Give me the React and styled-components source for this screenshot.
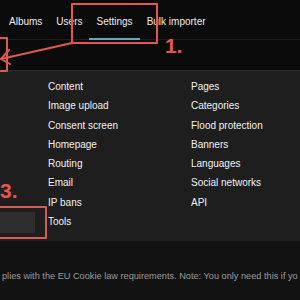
import React from 'react'
import styled, { createGlobalStyle } from 'styled-components'

const GlobalStyle = createGlobalStyle`
  html, body {
    margin: 0;
    padding: 0;
    background: #0b0b0b;
  }
  body {
    font-family: "Liberation Sans", Arial, sans-serif;
  }
`

const Page = styled.div`
  position: relative;
  width: 300px;
  height: 300px;
  overflow: hidden;
  display: flex;
  flex-direction: column;
  background: #0b0b0b;
`

const NavBar = styled.nav`
  height: 39px;
  display: flex;
  padding-left: 2px;
  border-bottom: 1px solid #1d1d1d;
`

const Tab = styled.a`
  box-sizing: border-box;
  height: 40px;
  margin-bottom: -1px;
  padding: 5px 7px 0;
  display: flex;
  align-items: center;
  font-size: 10px;
  color: #ececec;
  white-space: nowrap;
  border-bottom: 2px solid ${(p) => (p.$active ? '#5ea6c6' : 'transparent')};
`

const SubBar = styled.div`
  height: 30px;
  background: #0b0b0b;
`

const Panel = styled.div`
  box-sizing: border-box;
  height: 171px;
  display: grid;
  grid-template-columns: 48px 143px 1fr;
  background: #1e1e1e;
  border-top: 1px solid #2b2b2b;
  padding-top: 6px;
`

const Side = styled.div`
  display: flex;
  flex-direction: column;
  justify-content: flex-end;
  padding-bottom: 8px;
`

const Field = styled.div`
  width: 35px;
  height: 21px;
  background: #2e2e2e;
`

const Column = styled.ul`
  list-style: none;
  margin: 0;
  padding: 0;
`

const Item = styled.li`
  font-size: 10px;
  line-height: 19.3px;
  color: #f2f2f2;
  white-space: nowrap;
`

const Footer = styled.div`
  flex: 1;
  background: #121212;
  padding: 29px 0 0 2px;
  font-size: 9.2px;
  line-height: 12px;
  color: #9c9c9c;
  white-space: nowrap;
  overflow: hidden;
`

const Overlay = styled.svg`
  position: absolute;
  left: 0;
  top: 0;
  pointer-events: none;
`

const Step = styled.span`
  position: absolute;
  left: ${(p) => p.$x}px;
  top: ${(p) => p.$y}px;
  font-size: 21px;
  line-height: 21px;
  font-weight: bold;
  color: #e3574f;
`

const left = ['Content', 'Image upload', 'Consent screen', 'Homepage', 'Routing', 'Email', 'IP bans', 'Tools']
const right = ['Pages', 'Categories', 'Flood protection', 'Banners', 'Languages', 'Social networks', 'API']

export default function App() {
  return (
    <Page>
      <GlobalStyle />
      <NavBar>
        <Tab>Albums</Tab>
        <Tab>Users</Tab>
        <Tab $active>Settings</Tab>
        <Tab>Bulk importer</Tab>
      </NavBar>
      <SubBar />
      <Panel>
        <Side>
          <Field />
        </Side>
        <Column>
          {left.map((t) => (
            <Item key={t}>{t}</Item>
          ))}
        </Column>
        <Column>
          {right.map((t) => (
            <Item key={t}>{t}</Item>
          ))}
        </Column>
      </Panel>
      <Footer>plies with the EU Cookie law requirements. Note: You only need this if yo</Footer>

      <Overlay width="300" height="300" viewBox="0 0 300 300">
        <g fill="none" stroke="#e3574f" strokeWidth="2" strokeLinecap="round" strokeLinejoin="round">
          <rect x="72" y="4" width="85" height="39" />
          <line x1="72" y1="43" x2="1" y2="59" />
          <polyline points="9,50 1,59 10,64" />
          <polyline points="-2,38 7,38 7,71 -2,71" />
          <rect x="-3" y="207" width="49" height="31" />
        </g>
      </Overlay>
      <Step $x={165} $y={35}>1.</Step>
      <Step $x={0} $y={180}>3.</Step>
    </Page>
  )
}
